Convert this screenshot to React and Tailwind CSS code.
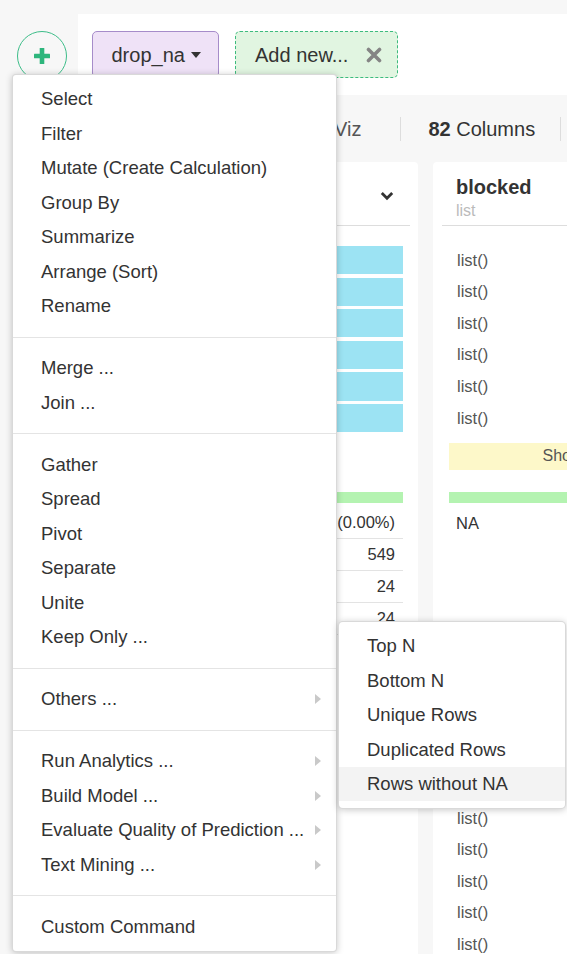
import React from 'react';

const menuGroups = [
  [
    { label: 'Select' },
    { label: 'Filter' },
    { label: 'Mutate (Create Calculation)' },
    { label: 'Group By' },
    { label: 'Summarize' },
    { label: 'Arrange (Sort)' },
    { label: 'Rename' },
  ],
  [{ label: 'Merge ...' }, { label: 'Join ...' }],
  [
    { label: 'Gather' },
    { label: 'Spread' },
    { label: 'Pivot' },
    { label: 'Separate' },
    { label: 'Unite' },
    { label: 'Keep Only ...' },
  ],
  [{ label: 'Others ...', sub: true }],
  [
    { label: 'Run Analytics ...', sub: true },
    { label: 'Build Model ...', sub: true },
    { label: 'Evaluate Quality of Prediction ...', sub: true },
    { label: 'Text Mining ...', sub: true },
  ],
  [{ label: 'Custom Command' }],
];

const subItems = ['Top N', 'Bottom N', 'Unique Rows', 'Duplicated Rows', 'Rows without NA'];

const Caret = () => (
  <span className="w-0 h-0 border-x-[5.5px] border-x-transparent border-t-[6px] border-t-[#333]" />
);

const MenuItem = ({ label, sub }) => (
  <div className="h-[34.5px] flex items-center justify-between pl-[28px] pr-[15px] whitespace-nowrap">
    <span>{label}</span>
    {sub && <span className="w-0 h-0 border-y-[5px] border-y-transparent border-l-[6px] border-l-[#c9c9c9]" />}
  </div>
);

const ListRow = ({ children }) => (
  <div className="h-[31.6px] flex items-center pl-[8px] text-[16.5px] text-[#555]">{children}</div>
);

export default function App() {
  return (
    <div className="relative w-[567px] h-[954px] overflow-hidden bg-[#f7f7f7] font-['Liberation_Sans',Arial,sans-serif] text-[#333] flex flex-col">
      {/* toolbar */}
      <div className="mt-[14px] flex h-[81px] shrink-0">
        <div className="w-[78px] shrink-0">
          <button className="mt-[16.5px] ml-[17px] w-[50px] h-[50px] rounded-full border-[1.5px] border-[#3dbd89] flex items-center justify-center">
            <svg width="16" height="16" viewBox="0 0 16 16">
              <rect x="5.7" y="0" width="4.6" height="16" rx="0.5" fill="#2db67c" />
              <rect x="0" y="5.7" width="16" height="4.6" rx="0.5" fill="#2db67c" />
            </svg>
          </button>
        </div>
        <div className="flex-1 bg-white flex items-start gap-[16px] pl-[14px] pt-[17px]">
          <div className="h-[47px] w-[127px] pl-[18.5px] flex items-center gap-[6px] bg-[#efe2f7] border-[1.5px] border-[#a68cca] rounded-[5px] text-[20px]">
            <span>drop_na</span>
            <Caret />
          </div>
          <div className="h-[47px] w-[163px] pl-[19px] flex items-center gap-[18px] bg-[#e1f5e1] border-[1.5px] border-dashed border-[#3dbb7e] rounded-[5px] text-[20px]">
            <span>Add new...</span>
            <svg width="16" height="16" viewBox="0 0 16 16">
              <path d="M2.5 2.5 L13.5 13.5 M13.5 2.5 L2.5 13.5" stroke="#858585" strokeWidth="3.6" strokeLinecap="round" />
            </svg>
          </div>
        </div>
      </div>

      {/* header row */}
      <div className="h-[67px] shrink-0 flex items-center text-[20px] text-[#555] pl-[334px]">
        <span>Viz</span>
        <span className="ml-[39px] w-px h-[24px] bg-[#ddd]" />
        <span className="ml-[27px] text-[#333]">
          <b>82</b> Columns
        </span>
        <span className="ml-[25px] w-px h-[24px] bg-[#ddd]" />
      </div>

      {/* cards */}
      <div className="flex-1 min-h-0 flex gap-[15px] pl-[90px]">
        <div className="w-[328px] shrink-0 bg-white rounded-t-[4px] flex flex-col">
          <div className="mx-[8px] h-[64px] border-b border-[#ddd] flex items-center justify-end pt-[4px] pr-[16px]">
            <svg width="14" height="10" viewBox="0 0 14 10">
              <path d="M1.8 2 L7 7.2 L12.2 2" fill="none" stroke="#333" strokeWidth="2.8" />
            </svg>
          </div>
          <div className="px-[15px] flex flex-col">
            <div className="mt-[20px] flex flex-col gap-[3.3px]">
              {[0, 1, 2, 3, 4, 5].map((i) => (
                <div key={i} className="h-[28.3px] bg-[#9ce3f3]" />
              ))}
            </div>
            <div className="mt-[60px] h-[11px] bg-[#b4f3b1]" />
            <div className="h-[36px] pt-[4px] flex items-center justify-end pr-[8px] border-b border-[#e3e3e3] text-[16.5px]">
              <span>0 (0.00%)</span>
            </div>
            {['549', '24', '24'].map((v, i) => (
              <div key={i} className="h-[32px] flex items-center justify-end pr-[8px] border-b border-[#e3e3e3] text-[16.5px]">
                <span>{v}</span>
              </div>
            ))}
          </div>
        </div>

        <div className="w-[300px] shrink-0 bg-white rounded-t-[4px] flex flex-col">
          <div className="mx-[9px] border-b border-[#ddd] pl-[14px] pt-[13px] pb-[4px]">
            <div className="text-[20px] font-bold leading-[24px]">blocked</div>
            <div className="mt-[2px] text-[16px] leading-[20px] text-[#bbb]">list</div>
          </div>
          <div className="px-[16px] flex flex-col">
            <div className="mt-[18.2px]">
              {[0, 1, 2, 3, 4, 5].map((i) => (
                <ListRow key={i}>list()</ListRow>
              ))}
            </div>
            <div className="mt-[9.2px] h-[27px] bg-[#fdf8c9] flex items-center justify-center text-[16px] text-[#555]">
              Show More
            </div>
            <div className="mt-[22px] h-[11px] bg-[#b4f3b1]" />
            <div className="h-[36px] pt-[4px] flex items-center pl-[7px] text-[16.5px]">NA</div>
            <div className="mt-[263.2px]">
              {[0, 1, 2, 3, 4].map((i) => (
                <ListRow key={i}>list()</ListRow>
              ))}
            </div>
          </div>
        </div>
      </div>

      {/* main dropdown menu */}
      <div className="absolute left-[12px] top-[74px] w-[325px] h-[878px] bg-white border border-black/15 rounded-[4px] shadow-[0_1px_7px_rgba(0,0,0,0.22)] pt-[6.75px] text-[18.5px] text-[#333]">
        {menuGroups.map((group, gi) => (
          <div key={gi}>
            {gi > 0 && <div className="my-[13.25px] h-px bg-[#e4e4e4]" />}
            {group.map((item) => (
              <MenuItem key={item.label} {...item} />
            ))}
          </div>
        ))}
      </div>

      {/* submenu */}
      <div className="absolute left-[338px] top-[621px] w-[228px] bg-white border border-black/15 rounded-[5px] shadow-[0_1px_7px_rgba(0,0,0,0.22)] py-[6.75px] text-[18.5px] text-[#333]">
        {subItems.map((s) => (
          <div
            key={s}
            className={`h-[34.5px] flex items-center pl-[28px] whitespace-nowrap ${s === 'Rows without NA' ? 'bg-[#f3f3f3]' : ''}`}
          >
            {s}
          </div>
        ))}
      </div>
    </div>
  );
}
